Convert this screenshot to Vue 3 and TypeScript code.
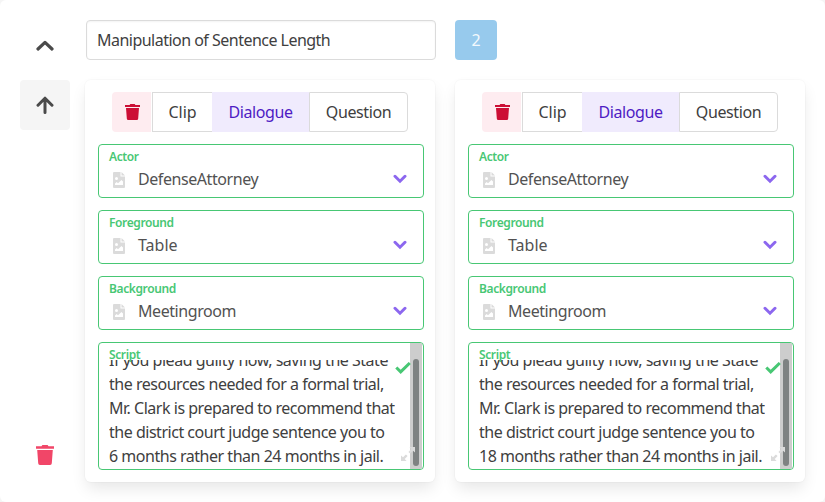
<script setup lang="ts">
interface Field {
  label: string
  value: string
}
interface Scene {
  id: number
  fields: Field[]
  lines: string[]
}

const modes: string[] = ['Clip', 'Dialogue', 'Question']
const selectedMode = 'Dialogue'

function makeScene(id: number, months: number): Scene {
  return {
    id,
    fields: [
      { label: 'Actor', value: 'DefenseAttorney' },
      { label: 'Foreground', value: 'Table' },
      { label: 'Background', value: 'Meetingroom' },
    ],
    lines: [
      'If you plead guilty now, saving the State',
      'the resources needed for a formal trial,',
      'Mr. Clark is prepared to recommend that',
      'the district court judge sentence you to',
      `${months} months rather than 24 months in jail.`,
    ],
  }
}

const scenes: Scene[] = [makeScene(1, 6), makeScene(2, 18)]
const title = 'Manipulation of Sentence Length'
</script>

<template>
  <main class="panel">
    <nav class="rail">
      <button class="rail-btn collapse" aria-label="Collapse">
        <svg width="18" height="12" viewBox="0 0 18 12"><path d="M2 9 9 2.4 16 9" fill="none" stroke="#4a4a4a" stroke-width="3.2" stroke-linejoin="round" stroke-linecap="round" /></svg>
      </button>
      <button class="rail-btn up" aria-label="Move up">
        <svg width="18" height="18" viewBox="0 0 18 18"><path d="M2 9.2 9 2.2l7 7M9 2.6V16.4" fill="none" stroke="#4a4a4a" stroke-width="3" stroke-linejoin="round" stroke-linecap="round" /></svg>
      </button>
      <button class="rail-btn remove" aria-label="Delete">
        <svg width="18" height="20" viewBox="0 0 18 20"><path d="M0 1.2h5.5L6.4 0h5.2l.9 1.2H18v2.5H0zM1.2 5h15.6l-1 13.3q-.1 1.7-1.7 1.7H3.9q-1.6 0-1.7-1.7z" fill="#f14668" /></svg>
      </button>
    </nav>

    <div class="content">
      <header class="head">
        <input class="title" :value="title" spellcheck="false" />
        <button class="count">2</button>
      </header>

      <div class="cards">
        <section v-for="scene in scenes" :key="scene.id" class="card">
          <div class="modes">
            <button class="trash" aria-label="Delete scene">
              <svg width="15" height="16" viewBox="0 0 18 20" preserveAspectRatio="none"><path d="M0 1.2h5.5L6.4 0h5.2l.9 1.2H18v2.5H0zM1.2 5h15.6l-1 13.3q-.1 1.7-1.7 1.7H3.9q-1.6 0-1.7-1.7z" fill="#cc0f35" /></svg>
            </button>
            <button v-for="mode in modes" :key="mode" class="mode" :class="[mode.toLowerCase(), { active: mode === selectedMode }]">{{ mode }}</button>
          </div>

          <div v-for="field in scene.fields" :key="field.label" class="field">
            <span class="label">{{ field.label }}</span>
            <div class="row">
              <svg class="file" width="12" height="16" viewBox="0 0 12 16"><path fill-rule="evenodd" d="M1 0h6.5v4.5H12V15q0 1-1 1H1q-1 0-1-1V1q0-1 1-1zM8.5 0 12 3.5H8.5zM3.5 5a1.5 1.5 0 1 0 0 3 1.5 1.5 0 0 0 0-3zM2 13h8V9.5L8.5 8 5 11.2 3.7 10 2 11.5z" fill="#dbdbdb" /></svg>
              <span class="value" :class="{ short: field.value.length < 6 }">{{ field.value }}</span>
              <svg class="chev" width="14" height="10" viewBox="0 0 14 10"><path d="M2 2.3 7 7.2l5-4.9" fill="none" stroke="#8c67ef" stroke-width="3" stroke-linecap="round" /></svg>
            </div>
          </div>

          <div class="field script">
            <div class="track"><i class="thumb"></i></div>
            <div class="scroll">
              <div class="lines">
                <div v-for="line in scene.lines" :key="line" class="line">{{ line }}</div>
              </div>
            </div>
            <span class="label">Script</span>
            <svg class="check" width="16" height="12" viewBox="0 0 16 12"><path d="m1.3 5.5 4.4 4.4L14.8 1" fill="none" stroke="#48c774" stroke-width="3" /></svg>
            <svg class="resize" width="14" height="14" viewBox="0 0 14 14"><path d="M8.4 0H14v5.6L12 3.7 9.1 6.6 7.4 4.9 10.3 2zM0 8.4V14h5.6l-1.9-2 2.9-2.9-1.7-1.7L2 10.3z" fill="#dbdbdb" /></svg>
          </div>
        </section>
      </div>
    </div>
  </main>
</template>

<style>
body {
  background: #f5f5f5;
}
</style>

<style scoped>
* {
  box-sizing: border-box;
}
.panel {
  display: flex;
  gap: 15px;
  width: 825px;
  height: 502px;
  padding: 20px;
  overflow: hidden;
  border-radius: 6px;
  background: #fff;
  color: #525252;
  font-family: "Noto Sans", sans-serif;
  font-size: 16px;
  line-height: 24px;
}
button,
input {
  margin: 0;
  padding: 0;
  border: 0;
  background: none;
  color: inherit;
  font: inherit;
}
svg {
  display: block;
  flex: none;
}
.rail {
  display: flex;
  flex-direction: column;
  gap: 10px;
  width: 50px;
  height: 460px;
}
.rail-btn {
  display: flex;
  align-items: center;
  justify-content: center;
  width: 50px;
  height: 50px;
  border-radius: 4px;
}
.collapse {
  padding-top: 1px;
}
.up {
  background: #f5f5f5;
}
.remove {
  margin-top: auto;
}
.head {
  display: flex;
  gap: 19px;
  height: 40px;
  padding-left: 1px;
}
.title {
  width: 350px;
  padding: 0 10px;
  border: 1px solid #dbdbdb;
  border-radius: 4px;
  box-shadow: inset 0 1px 2px rgba(10, 10, 10, 0.05);
  color: #404040;
  letter-spacing: -0.52px;
}
.count {
  width: 42px;
  border-radius: 4px;
  background: #97caed;
  color: #f3f9fd;
}
.cards {
  display: flex;
  gap: 20px;
  margin-top: 20px;
}
.card {
  display: flex;
  flex-direction: column;
  gap: 12px;
  width: 350px;
  height: 402px;
  padding: 12px 11px 12px 13px;
  border-radius: 6px;
  background: #fff;
  box-shadow: 0 8px 16px -2px rgba(10, 10, 10, 0.1), 0 0 0 1px rgba(10, 10, 10, 0.02);
}
.modes {
  display: flex;
  height: 40px;
  padding-left: 14px;
}
.trash {
  display: flex;
  align-items: center;
  justify-content: center;
  width: 39px;
  margin-right: 1px;
  padding-left: 2px;
  border-radius: 4px 0 0 4px;
  background: #feecf0;
}
.mode {
  border: 1px solid #dbdbdb;
  color: #404040;
  letter-spacing: -0.4px;
}
.clip {
  width: 60px;
  border-right: 0;
  letter-spacing: -0.1px;
}
.dialogue {
  width: 97px;
}
.question {
  width: 99px;
  border-radius: 0 4px 4px 0;
}
.active {
  border-color: #f0ebfd;
  background: #f0ebfd;
  color: #4e1bc4;
}
.field {
  height: 54px;
  border: 1px solid #48c774;
  border-radius: 4px;
}
.label {
  display: block;
  height: 22px;
  padding: 0 10px;
  color: #48c774;
  font-size: 12px;
  font-weight: 600;
  letter-spacing: -0.38px;
  line-height: 24px;
}
.row {
  display: flex;
  align-items: center;
  height: 24px;
  padding: 0 17px 0 14px;
}
.file {
  margin: 1px 0 0 -0.5px;
}
.chev {
  margin-right: -0.5px;
}
.value {
  flex: 1;
  padding-left: 13.5px;
  letter-spacing: -0.43px;
}
.value.short {
  letter-spacing: 0;
}
.script {
  position: relative;
  height: 128px;
  overflow: hidden;
}
.track {
  position: absolute;
  top: 0;
  right: 1px;
  bottom: 0;
  width: 12px;
  background: #cdcdcd;
}
.thumb {
  position: absolute;
  top: 16px;
  right: 3px;
  bottom: 3px;
  width: 6px;
  border-radius: 3px;
  background: #7e8282;
}
.scroll {
  position: absolute;
  top: 17px;
  bottom: 0;
  left: 10px;
  display: flex;
  flex-direction: column;
  justify-content: flex-end;
  overflow: hidden;
  color: #404040;
}
.lines {
  padding-bottom: 1px;
}
.line {
  letter-spacing: -0.48px;
  white-space: nowrap;
}
.script .label {
  position: relative;
}
.check {
  position: absolute;
  top: 19px;
  right: 12px;
}
.resize {
  position: absolute;
  right: 8px;
  bottom: 8px;
}
</style>
